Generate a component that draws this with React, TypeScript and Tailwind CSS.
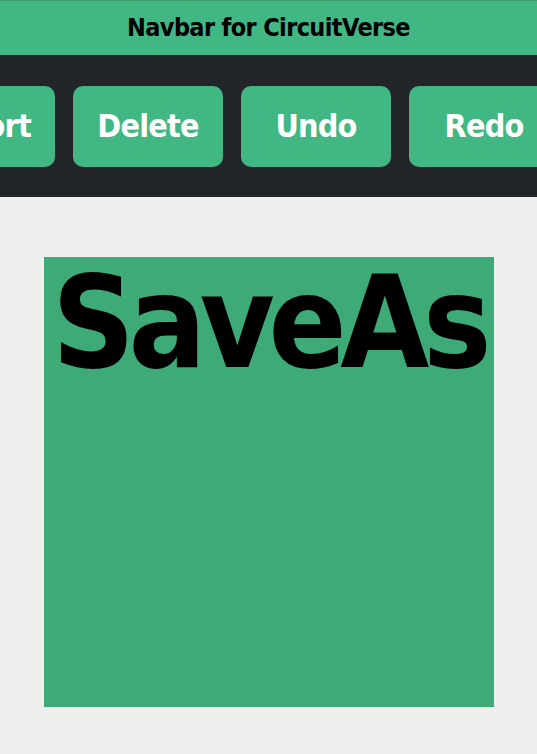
const buttons = ['Export', 'Delete', 'Undo', 'Redo', 'Zoom'];

export default function App() {
  return (
    <div
      className="min-h-[754px] bg-[#efefed] overflow-hidden"
      style={{ fontFamily: '"DejaVu Sans Condensed", "Liberation Sans Narrow", "DejaVu Sans", sans-serif' }}
    >
      <div className="h-[55px] bg-[#41b883] border-t border-[#3a9e72] flex items-center justify-center">
        <h1 className="text-[25px] font-bold text-black tracking-tight">Navbar for CircuitVerse</h1>
      </div>
      <div className="h-[142px] bg-[#212529] flex items-center overflow-hidden">
        <div className="flex gap-[18px] -ml-[95px] shrink-0">
          {buttons.map((b) => (
            <button
              key={b}
              className="w-[150px] h-[81px] shrink-0 rounded-[10px] bg-[#41b883] text-white text-[32px] font-bold tracking-tight flex items-center justify-center"
            >
              {b}
            </button>
          ))}
        </div>
      </div>
      <div className="flex justify-center pt-[60px]">
        <div className="w-[450px] h-[450px] bg-[#3daa78] flex justify-center">
          <span className="text-[128px] leading-none font-bold text-black mt-[2px] tracking-[-0.05em]">SaveAs</span>
        </div>
      </div>
    </div>
  );
}
